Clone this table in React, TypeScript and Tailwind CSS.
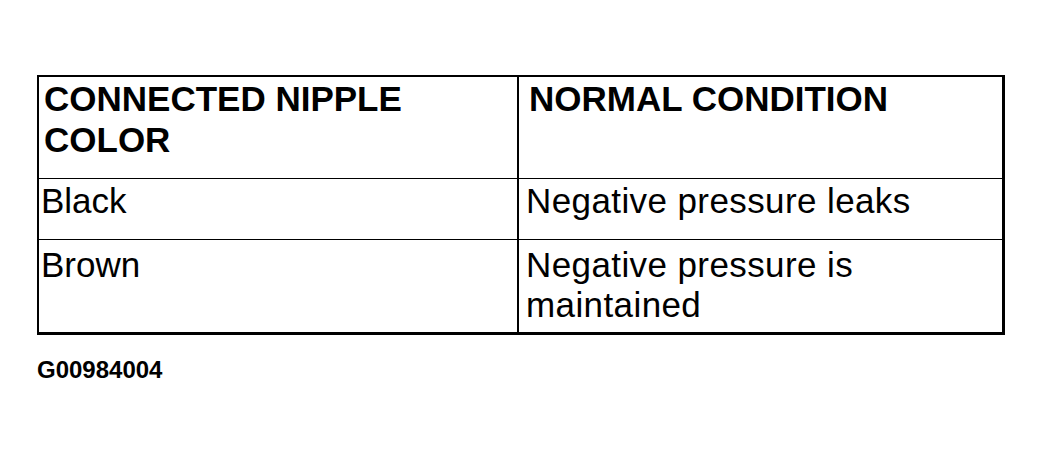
const rows = [
  { color: 'Black', condition: 'Negative pressure leaks', h: 'h-[61px]', pad: 'pt-[2px]' },
  { color: 'Brown', condition: 'Negative pressure is maintained', h: 'h-[92px]', pad: 'pt-[5px]' },
];

export default function App() {
  return (
    <div className="min-h-[455px] w-[1044px] bg-white pl-[37px] pt-[75px] text-black font-['Liberation_Sans',Arial,sans-serif]">
      <div className="w-[968px] border-t-2 border-l-2 border-r-[3px] border-b-[3px] border-black">
        <div className="grid h-[102px] grid-cols-[480px_1fr] border-b border-black">
          <div className="border-r-2 border-black pl-[5px] pt-[1px] text-[35px] font-bold leading-[41px]">
            CONNECTED NIPPLE COLOR
          </div>
          <div className="pl-[10px] pt-[1px] text-[35px] font-bold leading-[41px]">NORMAL CONDITION</div>
        </div>
        {rows.map((row, idx) => (
          <div
            key={row.color}
            className={`grid grid-cols-[480px_1fr] ${row.h} ${idx < rows.length - 1 ? 'border-b border-black' : ''}`}
          >
            <div className={`border-r-2 border-black pl-[2px] ${row.pad} text-[35px] leading-[40px]`}>{row.color}</div>
            <div className={`pl-[7px] ${row.pad} text-[35px] leading-[40px] tracking-[0.4px]`}>{row.condition}</div>
          </div>
        ))}
      </div>
      <p className="mt-[22px] text-[24px] font-bold leading-[26px]">G00984004</p>
    </div>
  );
}
